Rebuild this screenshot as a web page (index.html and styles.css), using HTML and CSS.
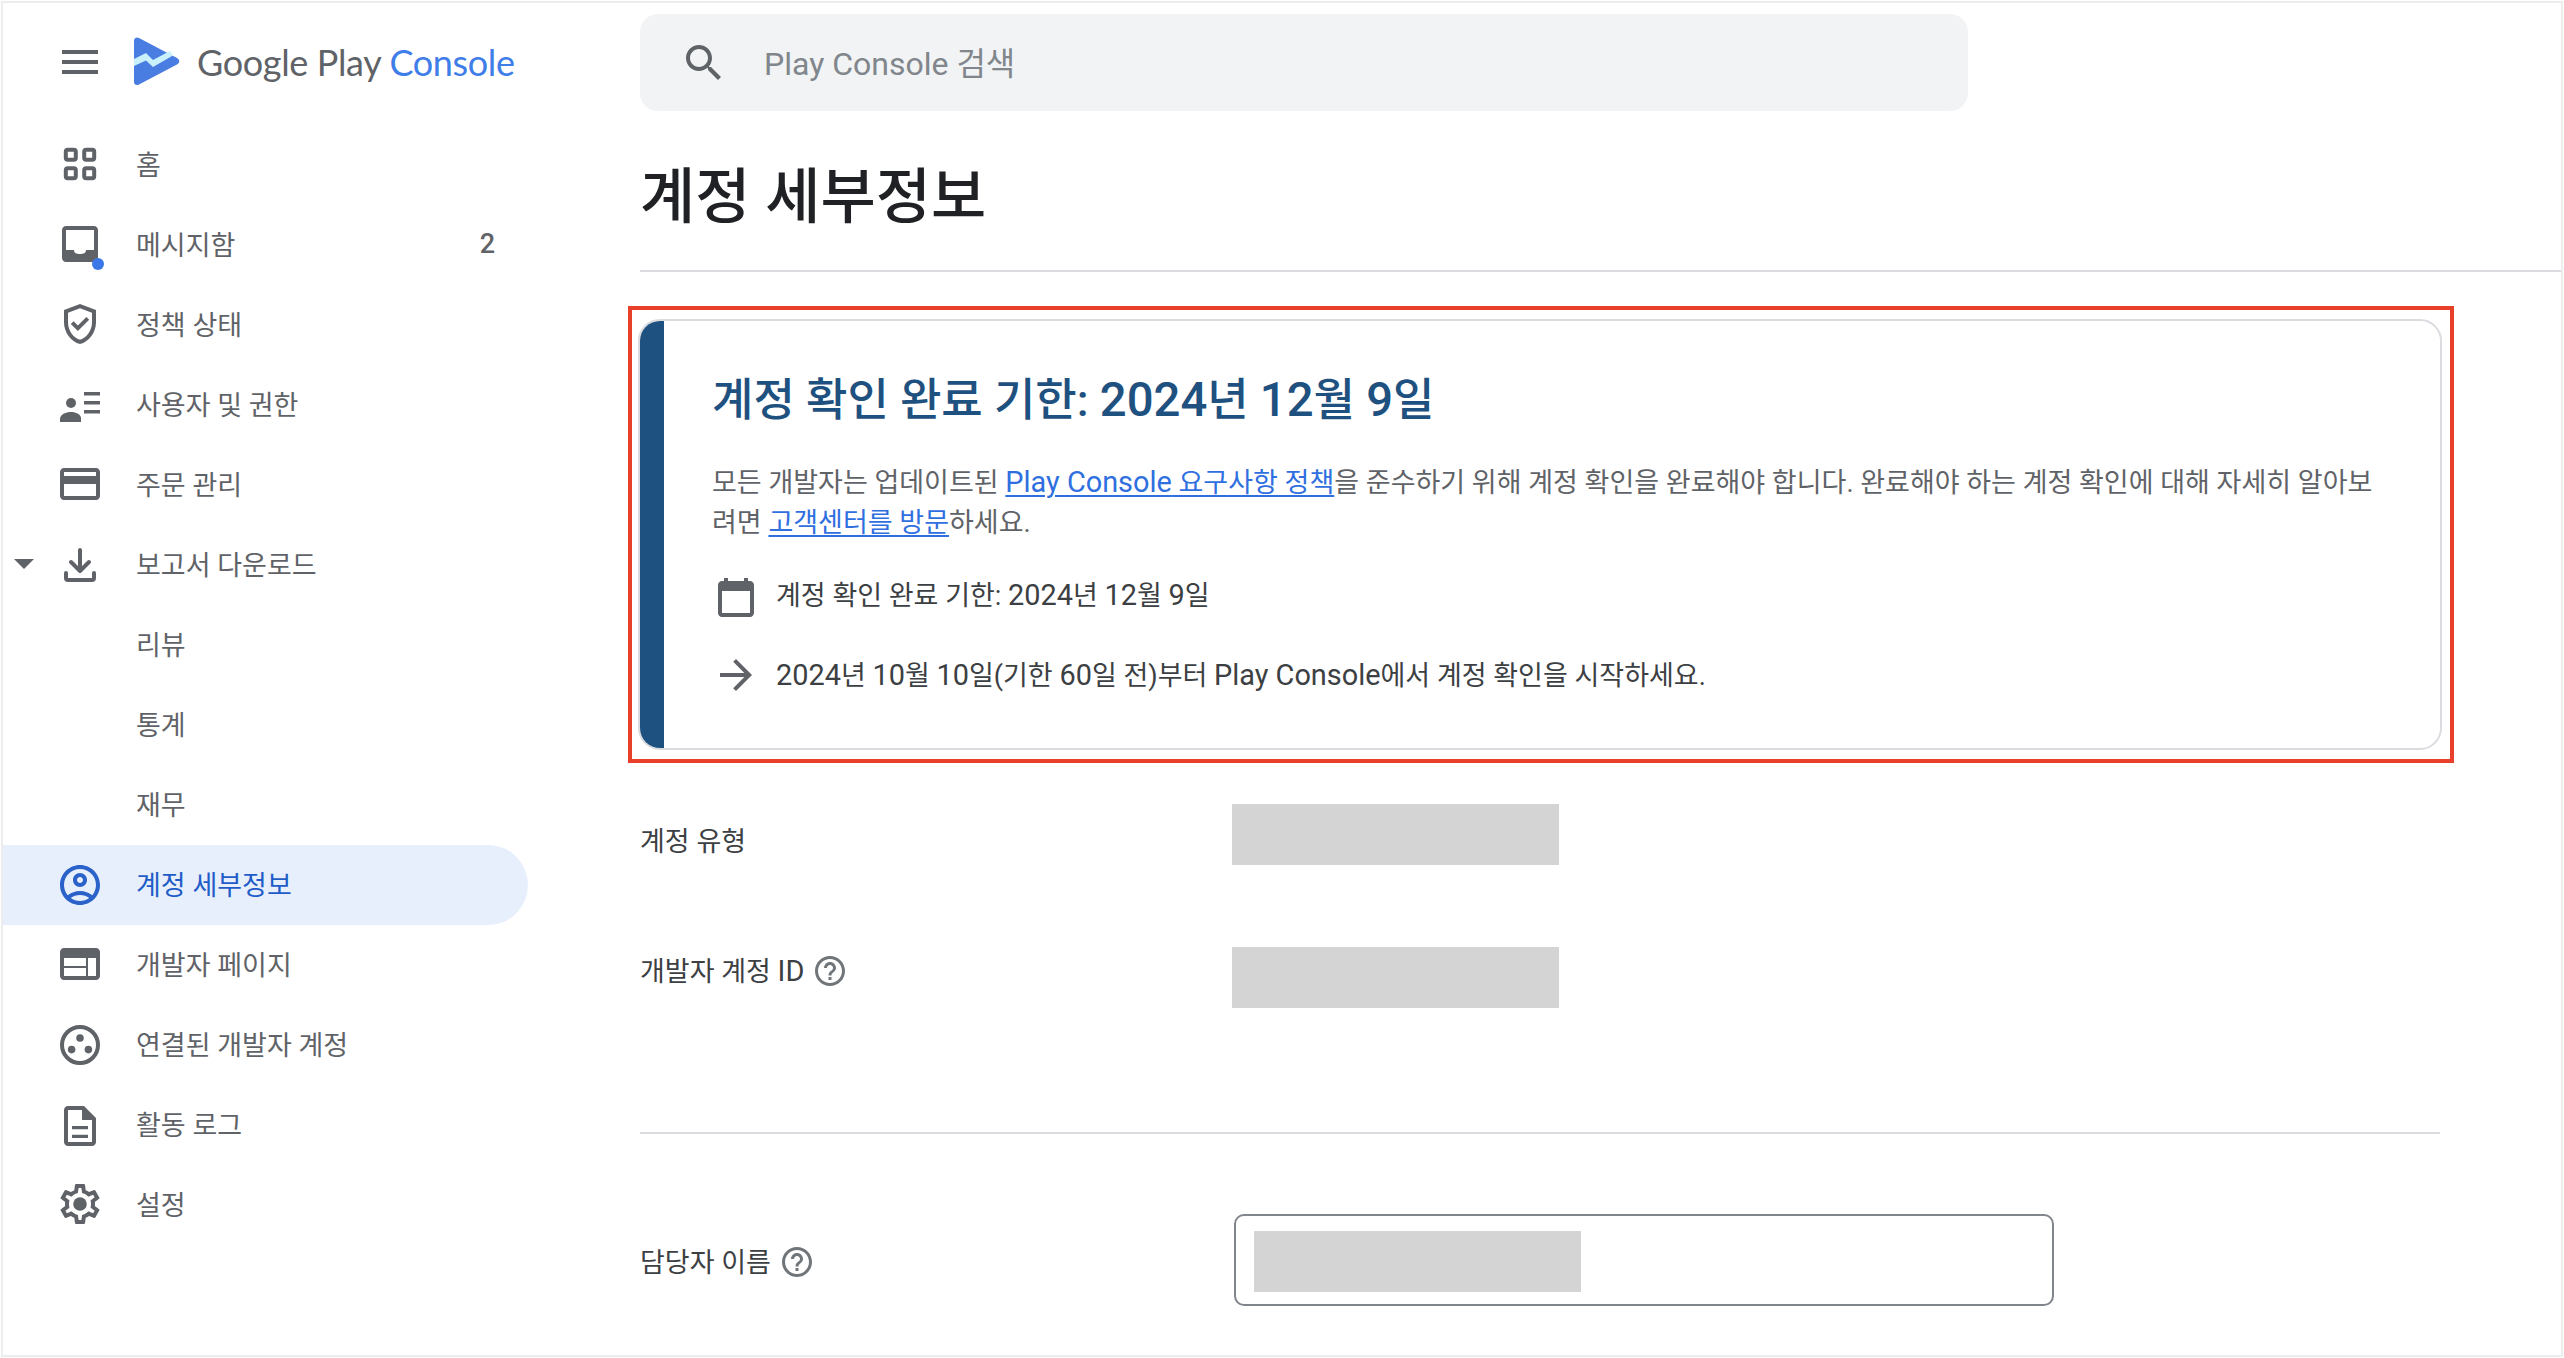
FILE: index.html
```html
<!DOCTYPE html>
<html lang="ko">
<head>
<meta charset="utf-8">
<title>계정 세부정보</title>
<link rel="stylesheet" href="styles.css">
</head>
<body>
<div class="frame">
  <nav class="sidebar">
    <div class="brand">
      <svg class="icon" viewBox="0 0 24 24"><path d="M3 18h18v-2H3v2zm0-5h18v-2H3v2zm0-7v2h18V6H3z"/></svg>
      <svg class="logo" viewBox="0 0 46 50"><path class="logo-play" d="M0 4C0 1 2.500-.5 5 1l38 20c3 1.500 3 5 0 6.500L5 47.500C2.500 49 0 47.500 0 45z"/><path class="logo-wave" d="M0 22l12-6 7 7 17-9 3 4.500-20 11.500-7-6.500-12 5.500z"/></svg>
      <span class="wordmark">Google Play <span class="wordmark-accent">Console</span></span>
    </div>
    <ul class="menu">
      <li class="item"><span class="caret-slot"></span><svg class="icon" viewBox="0 0 24 24"><g class="outline"><rect x="4.900" y="4.900" width="5" height="5" rx="1"/><rect x="14.100" y="4.900" width="5" height="5" rx="1"/><rect x="4.900" y="14.100" width="5" height="5" rx="1"/><rect x="14.100" y="14.100" width="5" height="5" rx="1"/></g></svg><span class="label">홈</span></li>
      <li class="item"><span class="caret-slot"></span><span class="icon-wrap"><svg class="icon" viewBox="0 0 24 24"><path d="M19 3H5c-1.100 0-2 .9-2 2v14c0 1.100.9 2 2 2h14c1.100 0 2-.9 2-2V5c0-1.100-.9-2-2-2zm0 12h-4c0 1.660-1.350 2-3 2s-3-.34-3-2H5V5h14v10z"/></svg><span class="dot"></span></span><span class="label">메시지함</span><span class="count">2</span></li>
      <li class="item"><span class="caret-slot"></span><svg class="icon" viewBox="0 0 24 24"><path d="M12 2L4 5v6.090c0 5.050 3.410 9.760 8 10.910 4.590-1.150 8-5.860 8-10.910V5l-8-3zm6 9.090c0 4-2.550 7.700-6 8.830-3.450-1.130-6-4.820-6-8.830v-4.700l6-2.250 6 2.250v4.700z"/><path d="M8.820 10.590L7.400 12l3.540 3.540 5.660-5.660-1.410-1.410-4.250 4.240z"/></svg><span class="label">정책 상태</span></li>
      <li class="item"><span class="caret-slot"></span><svg class="icon" viewBox="0 0 24 24"><circle cx="7.500" cy="11.500" r="2.500"/><path d="M2 21v-1.500C2 17.300 5 16 7.500 16s5 1.300 5 3V21z"/><path d="M14 6h8v1.800h-8zM14 10.500h8v1.800h-8zM14 15h8v1.800h-8z"/></svg><span class="label">사용자 및 권한</span></li>
      <li class="item"><span class="caret-slot"></span><svg class="icon" viewBox="0 0 24 24"><path d="M20 4H4c-1.110 0-1.990.89-1.990 2L2 18c0 1.110.89 2 2 2h16c1.110 0 2-.89 2-2V6c0-1.110-.89-2-2-2zm0 14H4v-6h16v6zm0-10H4V6h16v2z"/></svg><span class="label">주문 관리</span></li>
      <li class="item"><span class="caret-slot"><span class="caret"></span></span><svg class="icon" viewBox="0 0 24 24"><g class="outline round"><path d="M12 5v10.500M7.500 11l4.500 4.500 4.500-4.500M5 16.500V19a1 1 0 0 0 1 1h12a1 1 0 0 0 1-1v-2.500"/></g></svg><span class="label">보고서 다운로드</span></li>
      <li class="item"><span class="caret-slot"></span><span class="icon-blank"></span><span class="label">리뷰</span></li>
      <li class="item"><span class="caret-slot"></span><span class="icon-blank"></span><span class="label">통계</span></li>
      <li class="item"><span class="caret-slot"></span><span class="icon-blank"></span><span class="label">재무</span></li>
      <li class="item item-active"><span class="caret-slot"></span><svg class="icon" viewBox="0 0 24 24"><path d="M12 2C6.480 2 2 6.480 2 12s4.480 10 10 10 10-4.480 10-10S17.520 2 12 2zM7.350 18.500C8.660 17.560 10.260 17 12 17s3.340.56 4.650 1.500C15.340 19.440 13.740 20 12 20s-3.340-.56-4.650-1.500zm10.790-1.380C16.450 15.800 14.320 15 12 15s-4.450.8-6.140 2.120C4.700 15.730 4 13.950 4 12c0-4.420 3.580-8 8-8s8 3.580 8 8c0 1.950-.7 3.730-1.860 5.120z"/><path d="M12 6c-1.930 0-3.500 1.570-3.500 3.500S10.070 13 12 13s3.500-1.570 3.500-3.500S13.930 6 12 6zm0 5c-.83 0-1.500-.67-1.500-1.500S11.170 8 12 8s1.500.67 1.500 1.500S12.830 11 12 11z"/></svg><span class="label">계정 세부정보</span></li>
      <li class="item"><span class="caret-slot"></span><svg class="icon" viewBox="0 0 24 24"><path d="M20 4H4c-1.100 0-1.990.9-1.990 2L2 18c0 1.100.9 2 2 2h16c1.100 0 2-.9 2-2V6c0-1.100-.9-2-2-2zm-5 14H4v-4h11v4zm0-5H4V9h11v4zm5 5h-4V9h4v9z"/></svg><span class="label">개발자 페이지</span></li>
      <li class="item"><span class="caret-slot"></span><svg class="icon" viewBox="0 0 24 24"><circle class="ring" cx="12" cy="12.500" r="9"/><circle cx="12" cy="9" r="1.900"/><circle cx="7.800" cy="14.800" r="1.900"/><circle cx="16.200" cy="14.800" r="1.900"/></svg><span class="label">연결된 개발자 계정</span></li>
      <li class="item"><span class="caret-slot"></span><svg class="icon" viewBox="0 0 24 24"><path d="M14 3H6c-1.100 0-2 .9-2 2v16c0 1.100.9 2 2 2h12c1.100 0 2-.9 2-2V9l-6-6zm4 18H6V5h7v5h5v11z"/><path d="M8 13h8v1.600H8zM8 17.400h8V19H8z"/></svg><span class="label">활동 로그</span></li>
      <li class="item"><span class="caret-slot"></span><svg class="icon" viewBox="0 0 24 24"><path d="M19.430 12.980c.04-.32.07-.64.07-.98 0-.34-.03-.66-.07-.98l2.110-1.650c.19-.15.24-.42.12-.64l-2-3.460c-.09-.16-.26-.25-.44-.25-.06 0-.12.01-.17.03l-2.490 1c-.52-.4-1.080-.73-1.690-.98l-.38-2.650C14.460 2.180 14.250 2 14 2h-4c-.25 0-.46.18-.49.42l-.38 2.650c-.61.25-1.170.59-1.690.98l-2.490-1c-.06-.02-.12-.03-.18-.03-.17 0-.34.09-.43.25l-2 3.460c-.13.22-.07.49.12.64l2.110 1.650c-.04.32-.07.65-.07.98 0 .33.03.66.07.98l-2.110 1.650c-.19.15-.24.42-.12.64l2 3.460c.09.16.26.25.44.25.06 0 .12-.01.17-.03l2.490-1c.52.4 1.080.73 1.690.98l.38 2.650c.03.24.24.42.49.42h4c.25 0 .46-.18.49-.42l.38-2.650c.61-.25 1.170-.59 1.690-.98l2.490 1c.06.02.12.03.18.03.17 0 .34-.09.43-.25l2-3.460c.12-.22.07-.49-.12-.64l-2.110-1.650zm-1.980-1.710c.04.31.05.52.05.73 0 .21-.02.43-.05.73l-.14 1.130.89.7 1.080.84-.7 1.210-1.270-.51-1.040-.42-.9.68c-.43.32-.84.56-1.250.73l-1.060.43-.16 1.130-.2 1.350h-1.400l-.19-1.350-.16-1.130-1.060-.43c-.43-.18-.83-.41-1.230-.71l-.91-.7-1.060.43-1.270.51-.7-1.210 1.080-.84.89-.7-.14-1.130c-.03-.31-.05-.54-.05-.74s.02-.43.05-.73l.14-1.130-.89-.7-1.080-.84.7-1.210 1.270.51 1.040.42.9-.68c.43-.32.84-.56 1.250-.73l1.060-.43.16-1.130.2-1.350h1.390l.19 1.350.16 1.130 1.060.43c.43.18.83.41 1.230.71l.91.7 1.060-.43 1.270-.51.7 1.210-1.070.85-.89.7.14 1.130z"/><circle cx="12" cy="12" r="3.400"/></svg><span class="label">설정</span></li>
    </ul>
  </nav>
  <main class="main">
    <div class="search">
      <svg class="icon" viewBox="0 0 24 24"><path d="M15.500 14h-.79l-.28-.27C15.410 12.590 16 11.110 16 9.500 16 5.910 13.090 3 9.500 3S3 5.910 3 9.500 5.910 16 9.500 16c1.610 0 3.090-.59 4.230-1.570l.27.28v.79l5 4.990L20.490 19l-4.990-5zm-6 0C7.010 14 5 11.990 5 9.500S7.010 5 9.500 5 14 7.010 14 9.500 11.990 14 9.500 14z"/></svg>
      <span class="search-text">Play Console 검색</span>
    </div>
    <h1 class="title">계정 세부정보</h1>
    <div class="highlight">
      <section class="card">
        <div class="card-bar"></div>
        <div class="card-body">
          <h2 class="card-title">계정 확인 완료 기한: <span class="en">2024</span>년 <span class="en">12</span>월 <span class="en">9</span>일</h2>
          <p class="card-text">모든 개발자는 업데이트된 <a class="link" href="#"><span class="en">Play Console</span> 요구사항 정책</a>을 준수하기 위해 계정 확인을 완료해야 합니다. 완료해야 하는 계정 확인에 대해 자세히 알아보려면 <a class="link" href="#">고객센터를 방문</a>하세요.</p>
          <div class="card-row card-row-first">
            <svg class="icon" viewBox="0 0 24 24"><path d="M19 4.500h-1V3h-2v1.500H8V3H6v1.500H5c-1.100 0-2 .9-2 2v14c0 1.100.9 2 2 2h14c1.100 0 2-.9 2-2v-14c0-1.100-.9-2-2-2zm0 16H5v-11h14v11z"/></svg>
            <span class="row-text">계정 확인 완료 기한: <span class="en">2024</span>년 <span class="en">12</span>월 <span class="en">9</span>일</span>
          </div>
          <div class="card-row card-row-second">
            <svg class="icon" viewBox="0 0 24 24"><path d="M12 4l-1.410 1.410L16.170 11H4v2h12.170l-5.580 5.590L12 20l8-8z"/></svg>
            <span class="row-text"><span class="en">2024</span>년 <span class="en">10</span>월 <span class="en">10</span>일(기한 <span class="en">60</span>일 전)부터 <span class="en">Play Console</span>에서 계정 확인을 시작하세요.</span>
          </div>
        </div>
      </section>
    </div>
    <div class="field field-type">
      <div class="field-label field-label-type">계정 유형</div>
      <div class="redacted"></div>
    </div>
    <div class="field field-id">
      <div class="field-label field-label-id"><span>개발자 계정 <span class="en">ID</span></span><svg class="help" viewBox="0 0 24 24"><path d="M11 18h2v-2h-2v2zm1-16C6.480 2 2 6.480 2 12s4.480 10 10 10 10-4.480 10-10S17.520 2 12 2zm0 18c-4.410 0-8-3.590-8-8s3.590-8 8-8 8 3.590 8 8-3.590 8-8 8zm0-14c-2.210 0-4 1.790-4 4h2c0-1.100.9-2 2-2s2 .9 2 2c0 2-3 1.750-3 5h2c0-2.250 3-2.500 3-5 0-2.210-1.790-4-4-4z"/></svg></div>
      <div class="redacted"></div>
    </div>
    <hr class="section-rule">
    <div class="field field-contact">
      <div class="field-label"><span>담당자 이름</span><svg class="help" viewBox="0 0 24 24"><path d="M11 18h2v-2h-2v2zm1-16C6.480 2 2 6.480 2 12s4.480 10 10 10 10-4.480 10-10S17.520 2 12 2zm0 18c-4.410 0-8-3.590-8-8s3.590-8 8-8 8 3.590 8 8-3.590 8-8 8zm0-14c-2.210 0-4 1.790-4 4h2c0-1.100.9-2 2-2s2 .9 2 2c0 2-3 1.750-3 5h2c0-2.250 3-2.500 3-5 0-2.210-1.790-4-4-4z"/></svg></div>
      <div class="input"><div class="redacted redacted-input"></div></div>
    </div>
  </main>
</div>
</body>
</html>
```
FILE: styles.css
```css
* { box-sizing: border-box; }
html { background: #fff; }
body {
  margin: 1px;
  font-family: Roboto, "Noto Sans CJK KR", sans-serif;
  font-size: 27px;
  color: #3c4043;
}
ul, h1, h2, p { margin: 0; padding: 0; }
.en { font-size: 1.07em; }
.frame {
  display: flex;
  width: 2562px;
  height: 1356px;
  border: 2px solid #eceded;
  overflow: hidden;
}
.icon { width: 48px; height: 48px; flex: none; fill: #5f6368; display: block; }
.outline { fill: none; stroke: #5f6368; stroke-width: 2; }
.round { stroke-linecap: round; stroke-linejoin: round; }
.ring { fill: none; stroke: #5f6368; stroke-width: 2; }

/* sidebar */
.sidebar { width: 637px; flex: none; }
.brand {
  height: 121px;
  display: flex;
  align-items: center;
  padding-left: 53px;
  padding-bottom: 3px;
}
.logo { width: 46px; height: 50px; margin-left: 30px; flex: none; }
.logo-play { fill: #4a7de2; }
.logo-wave { fill: #c9f1fb; }
.wordmark {
  margin-left: 17px;
  font-family: Lato, Roboto, sans-serif;
  font-size: 36px;
  letter-spacing: -0.35px;
  color: #5f6368;
  white-space: nowrap;
}
.wordmark-accent { color: #3f7de8; }
.menu { list-style: none; }
.item {
  display: flex;
  align-items: center;
  width: 525px;
  height: 80px;
  padding-right: 33px;
  color: #5f6368;
  border-radius: 0 40px 40px 0;
}
.caret-slot { width: 53px; flex: none; display: flex; padding-left: 11px; }
.caret {
  width: 0;
  height: 0;
  border-left: 10px solid transparent;
  border-right: 10px solid transparent;
  border-top: 10px solid #5f6368;
}
.icon-blank { width: 48px; flex: none; }
.icon-wrap { position: relative; width: 48px; height: 48px; flex: none; }
.dot {
  position: absolute;
  left: 36px;
  top: 38px;
  width: 12px;
  height: 12px;
  border-radius: 50%;
  background: #3b78e7;
}
.label { margin-left: 32px; padding-bottom: 1px; }
.count { margin-left: auto; font-weight: 500; padding-bottom: 1px; }
.item-active { background: #e7effc; color: #1f5cc8; margin-top: 1px; margin-bottom: -1px; }
.item-active .icon { fill: #2a62c9; }
.item-active .label { padding-bottom: 3px; }

/* main */
.main { flex: 1; min-width: 0; }
.search {
  display: flex;
  align-items: center;
  width: 1328px;
  height: 97px;
  margin-top: 11px;
  padding-left: 40px;
  background: #f1f3f4;
  border-radius: 18px;
}
.search-text { margin-left: 36px; padding-bottom: 3px; font-size: 32px; color: #80868b; }
.title {
  height: 161px;
  padding-top: 51px;
  font-size: 60px;
  font-weight: 500;
  line-height: 72px;
  color: #202124;
  border-bottom: 2px solid #dadce0;
}
.highlight {
  width: 1826px;
  margin: 34px 0 0 -12px;
  padding: 9px 8px 9px 6px;
  border: 4px solid #e8402a;
}
.card {
  display: flex;
  height: 431px;
  border: 2px solid #dadce0;
  border-radius: 22px;
  overflow: hidden;
}
.card-bar { width: 24px; flex: none; background: #1f5180; }
.card-body { flex: 1; min-width: 0; padding: 51px 48px 0 48px; }
.card-title {
  height: 56px;
  font-size: 45px;
  font-weight: 500;
  line-height: 56px;
  color: #1f5180;
}
.card-title .en { font-size: 1.05em; }
.card-text { margin-top: 35px; line-height: 39.5px; color: #5f6368; }
.link { color: #2f6fe0; text-decoration: underline; text-underline-offset: 3px; }
.card-row { display: flex; align-items: center; gap: 16px; height: 48px; color: #3c4043; }
.row-text { padding-bottom: 3px; }
.card-row-first { margin-top: 29px; }
.card-row-first .row-text { padding-bottom: 5px; }
.card-row-second { margin-top: 31px; }

/* fields */
.field { display: flex; }
.field-label {
  width: 592px;
  flex: none;
  display: flex;
  align-items: center;
  gap: 8px;
  white-space: pre;
}
.field-type { margin-top: 41px; }
.field-id { margin-top: 82px; }
.field-label-type { height: 61px; padding-top: 9px; }
.field-label-id { height: 44px; }
.help { width: 36px; height: 36px; flex: none; fill: #70757a; margin-top: 3px; }
.redacted { width: 327px; height: 61px; background: #d4d4d4; }
.section-rule {
  width: 1800px;
  height: 2px;
  margin: 124px 0 0;
  border: 0;
  background: #dadce0;
}
.field-contact { margin-top: 80px; align-items: center; }
.input {
  width: 820px;
  height: 92px;
  margin-left: 2px;
  padding: 15px 0 0 18px;
  border: 2px solid #80868b;
  border-radius: 10px;
}
```
